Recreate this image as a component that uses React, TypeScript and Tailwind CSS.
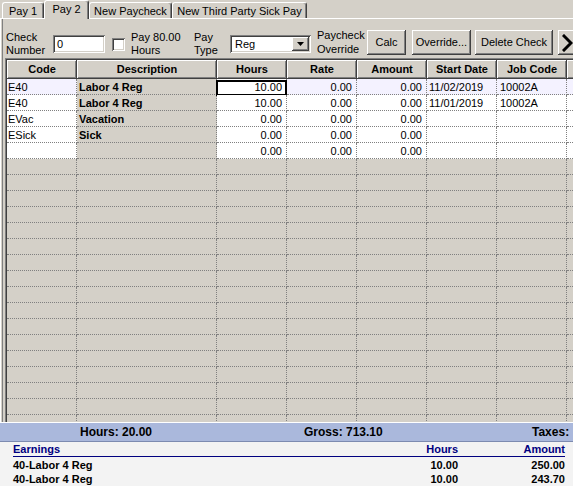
import React from "react";

const raised =
  "shadow-[inset_-1px_-1px_0_#404040,inset_1px_1px_0_#ffffff,inset_-2px_-2px_0_#808080]";
const sunken =
  "shadow-[inset_1px_1px_0_#808080,inset_-1px_-1px_0_#ffffff,inset_2px_2px_0_#404040,inset_-2px_-2px_0_#d4d0c8]";

const W = [
  "w-[70px]",
  "w-[140px]",
  "w-[70px]",
  "w-[70px]",
  "w-[70px]",
  "w-[70px]",
  "w-[70px]",
  "w-[70px]",
];

const HEAD = ["Code", "Description", "Hours", "Rate", "Amount", "Start Date", "Job Code", ""];

type Row = {
  code: string;
  desc: string;
  hours: string;
  rate: string;
  amount: string;
  start: string;
  job: string;
  sel?: boolean;
};

const ROWS: Row[] = [
  { code: "E40", desc: "Labor 4 Reg", hours: "10.00", rate: "0.00", amount: "0.00", start: "11/02/2019", job: "10002A", sel: true },
  { code: "E40", desc: "Labor 4 Reg", hours: "10.00", rate: "0.00", amount: "0.00", start: "11/01/2019", job: "10002A" },
  { code: "EVac", desc: "Vacation", hours: "0.00", rate: "0.00", amount: "0.00", start: "", job: "" },
  { code: "ESick", desc: "Sick", hours: "0.00", rate: "0.00", amount: "0.00", start: "", job: "" },
  { code: "", desc: "", hours: "0.00", rate: "0.00", amount: "0.00", start: "", job: "" },
];

const cellBase =
  "h-[16px] shrink-0 border-r border-b border-dotted border-[#808080] overflow-hidden whitespace-nowrap leading-[15px] pt-px";

function DataRow({ r }: { r: Row }) {
  const bg = r.sel ? "bg-[#f4f2ff]" : "bg-white";
  return (
    <div className="flex">
      <div className={`${cellBase} ${W[0]} ${bg} pl-px`}>{r.code}</div>
      <div className={`${cellBase} ${W[1]} bg-[#d4d0c8] pl-[2px] font-bold`}>{r.desc}</div>
      <div className={`${cellBase} ${W[2]} bg-white text-right pr-[4px] relative overflow-visible`}>
        {r.sel && (
          <div className="absolute left-[-1px] top-[1px] right-[-1px] bottom-[-2px] border-2 border-black pointer-events-none" />
        )}
        {r.hours}
      </div>
      <div className={`${cellBase} ${W[3]} ${bg} text-right pr-[4px]`}>{r.rate}</div>
      <div className={`${cellBase} ${W[4]} ${bg} text-right pr-[4px]`}>{r.amount}</div>
      <div className={`${cellBase} ${W[5]} ${bg} pl-[2px]`}>{r.start}</div>
      <div className={`${cellBase} ${W[6]} ${bg} pl-[3px]`}>{r.job}</div>
      <div className={`${cellBase} ${W[7]} ${bg}`}></div>
    </div>
  );
}

function EmptyRow() {
  return (
    <div className="flex">
      {W.map((w, i) => (
        <div key={i} className={`${cellBase} ${w} bg-[#d4d0c8]`}></div>
      ))}
    </div>
  );
}

function Btn({ w, children, extra }: { w: string; children: React.ReactNode; extra?: string }) {
  return (
    <div
      className={`${w} ${extra ?? ""} mt-[11px] h-[25px] shrink-0 bg-[#d4d0c8] ${raised} text-center leading-[25px] whitespace-nowrap`}
    >
      {children}
    </div>
  );
}

export default function App() {
  return (
    <div className="w-[573px] h-[486px] overflow-hidden bg-[#d4d0c8] flex flex-col font-['Liberation_Sans',Arial,sans-serif] text-[11px] text-black">
      {/* Tabs */}
      <div className="h-[18px] shrink-0 flex items-end pl-[2px]">
        <div className="w-[42px] h-[16px] shrink-0 border-t border-l border-white border-r border-r-[#404040] shadow-[inset_-1px_0_0_#808080] rounded-t-[3px] text-center leading-[16px] whitespace-nowrap">
          Pay 1
        </div>
        <div className="relative z-10 -mb-px w-[45px] h-[19px] shrink-0 bg-[#d4d0c8] border-t border-l border-white border-r border-r-[#404040] shadow-[inset_-1px_0_0_#808080] rounded-t-[3px] text-center leading-[17px] whitespace-nowrap">
          Pay 2
        </div>
        <div className="w-[83px] h-[16px] shrink-0 border-t border-l border-white border-r border-r-[#404040] shadow-[inset_-1px_0_0_#808080] rounded-t-[3px] text-center leading-[16px] whitespace-nowrap">
          New Paycheck
        </div>
        <div className="w-[135px] h-[16px] shrink-0 border-t border-l border-white border-r border-r-[#404040] shadow-[inset_-1px_0_0_#808080] rounded-t-[3px] text-center leading-[16px] whitespace-nowrap">
          New Third Party Sick Pay
        </div>
      </div>

      {/* Panel */}
      <div className="flex-1 min-h-0 border-t border-l border-white flex flex-col">
        <div className="flex-1 min-h-0 ml-px border-l border-[#808080] flex flex-col">
          {/* Controls */}
          <div className="h-[39px] shrink-0 flex items-start">
            <div className="ml-[3px] mt-[12px] w-[47px] shrink-0 leading-[13px]">
              Check
              <br />
              Number
            </div>
            <div className={`mt-[16px] w-[52px] h-[18px] shrink-0 bg-white ${sunken} pl-[4px] leading-[18px]`}>0</div>
            <div className={`ml-[7px] mt-[19px] w-[13px] h-[13px] shrink-0 bg-white ${sunken}`} />
            <div className="ml-[6px] mt-[12px] w-[63px] shrink-0 leading-[13px] whitespace-nowrap">
              Pay 80.00
              <br />
              Hours
            </div>
            <div className="mt-[12px] w-[36px] shrink-0 leading-[13px]">
              Pay
              <br />
              Type
            </div>
            <div className={`mt-[16px] w-[81px] h-[18px] shrink-0 bg-white ${sunken} flex items-center`}>
              <div className="flex-1 pl-[5px] leading-[18px]">Reg</div>
              <div className={`w-[17px] h-[14px] mr-[2px] bg-[#d4d0c8] ${raised} flex items-center justify-center`}>
                <svg width="7" height="4" viewBox="0 0 7 4">
                  <polygon points="0,0 7,0 3.5,4" fill="#000" />
                </svg>
              </div>
            </div>
            <div className="ml-[6px] mt-[9px] w-[50px] shrink-0 leading-[14px]">
              Paycheck
              <br />
              Override
            </div>
            <Btn w="w-[39px]">Calc</Btn>
            <Btn w="w-[59px]" extra="ml-[6px]">
              Override...
            </Btn>
            <Btn w="w-[78px]" extra="ml-[4px]">
              Delete Check
            </Btn>
            <div className={`ml-[5px] mt-[11px] w-[26px] h-[25px] shrink-0 bg-[#d4d0c8] ${raised} flex items-center pl-[4px]`}>
              <svg width="12" height="18" viewBox="0 0 12 18">
                <polyline points="2,2 9,9 2,16" fill="none" stroke="#000" strokeWidth="3" strokeLinecap="square" />
              </svg>
            </div>
          </div>

          {/* Grid */}
          <div className="ml-[2px] flex-1 min-h-0 border-t border-l border-[#808080] overflow-hidden">
            <div className="h-full border-t border-l border-[#404040] overflow-hidden">
              <div className="flex">
                {HEAD.map((h, i) => (
                  <div
                    key={i}
                    className={`${W[i]} h-[19px] shrink-0 bg-[#d4d0c8] ${raised} text-center font-bold leading-[19px] whitespace-nowrap`}
                  >
                    {h}
                  </div>
                ))}
              </div>
              {ROWS.map((r, i) => (
                <DataRow key={i} r={r} />
              ))}
              {Array.from({ length: 18 }).map((_, i) => (
                <EmptyRow key={i} />
              ))}
            </div>
          </div>
        </div>
      </div>

      {/* Totals bar */}
      <div className="h-[20px] shrink-0 border-t border-b border-t-white border-b-[#7d8bb0] bg-[#aab8dc] flex items-center font-bold text-[12px] leading-[16px] whitespace-nowrap">
        <div className="pl-[80px] w-[304px] shrink-0">Hours: 20.00</div>
        <div className="w-[228px] shrink-0">Gross: 713.10</div>
        <div className="shrink-0">Taxes:</div>
      </div>

      {/* Earnings */}
      <div className="h-[44px] shrink-0 bg-[#f3f3f3] pl-[13px] pr-[8px] font-bold text-[11px]">
        <div className="flex h-[15px] pt-px leading-[13px] border-b border-[#000080] text-[#000080]">
          <div className="flex-1">Earnings</div>
          <div className="w-[60px] text-right">Hours</div>
          <div className="w-[107px] text-right">Amount</div>
        </div>
        <div className="flex h-[14px] pt-px leading-[14px]">
          <div className="flex-1">40-Labor 4 Reg</div>
          <div className="w-[60px] text-right">10.00</div>
          <div className="w-[107px] text-right">250.00</div>
        </div>
        <div className="flex h-[14px] pt-px leading-[14px]">
          <div className="flex-1">40-Labor 4 Reg</div>
          <div className="w-[60px] text-right">10.00</div>
          <div className="w-[107px] text-right">243.70</div>
        </div>
      </div>
    </div>
  );
}
